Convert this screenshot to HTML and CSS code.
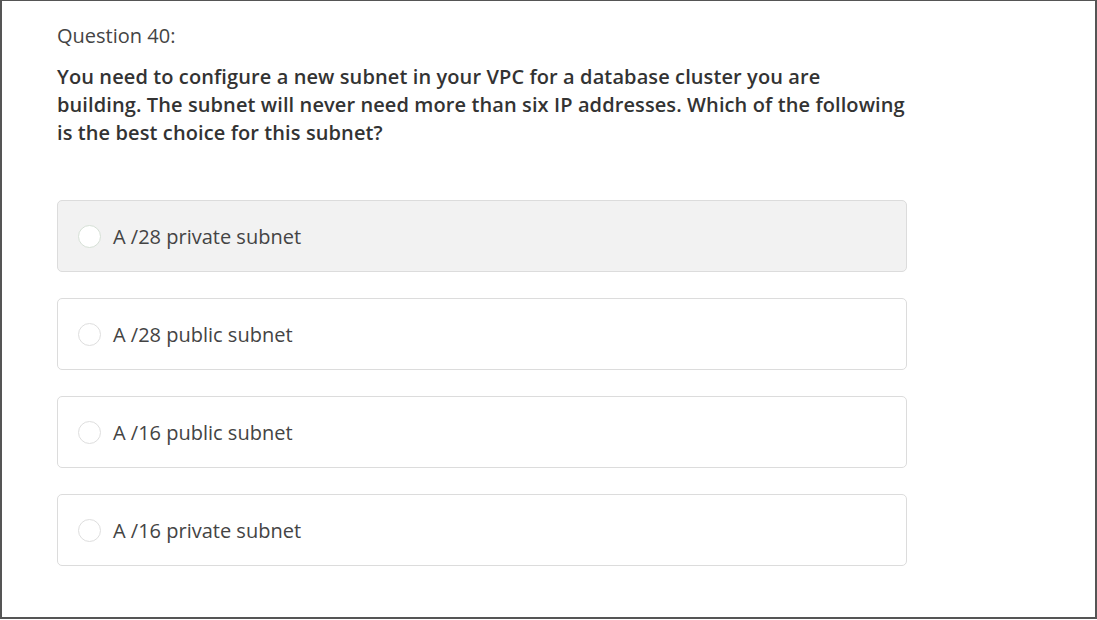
FILE: index.html
```html
<!DOCTYPE html>
<html>
<head>
<meta charset="utf-8">
<link rel="stylesheet" href="styles.css">
</head>
<body>
<div class="frame">
  <div class="question">
    <div class="qnum">Question 40:</div>
    <div class="qtext">You need to configure a new subnet in your VPC for a database cluster you are building. The subnet will never need more than six IP addresses. Which of the following is the best choice for this subnet?</div>
    <div class="options">
      <div class="option hover"><span class="radio"></span><span class="label">A /28 private subnet</span></div>
      <div class="option"><span class="radio"></span><span class="label">A /28 public subnet</span></div>
      <div class="option"><span class="radio"></span><span class="label">A /16 public subnet</span></div>
      <div class="option"><span class="radio"></span><span class="label">A /16 private subnet</span></div>
    </div>
  </div>
</div>
</body>
</html>
```
FILE: styles.css
```css
html, body {
  margin: 0;
  padding: 0;
  background: #fff;
}
.frame {
  box-sizing: border-box;
  width: 1097px;
  height: 619px;
  border-top: 1px solid #555;
  border-left: 2px solid #555;
  border-right: 2px solid #555;
  border-bottom: 2px solid #555;
  font-family: "Open Sans", "Noto Sans", sans-serif;
  color: #333;
}
.question {
  padding: 22px 0 0 55px;
  width: 850px;
}
.qnum {
  font-size: 20px;
  line-height: 26px;
  color: #444;
}
.qtext {
  margin-top: 14px;
  margin-right: -2px;
  font-size: 20px;
  letter-spacing: 0.1px;
  font-weight: 600;
  line-height: 28px;
  color: #333;
}
.options {
  margin-top: 53px;
  display: flex;
  flex-direction: column;
  gap: 26px;
}
.option {
  box-sizing: border-box;
  height: 72px;
  border: 1px solid #dcdcdc;
  border-radius: 5px;
  background: #fff;
  display: flex;
  align-items: center;
  padding-left: 20px;
}
.option.hover {
  background: #f2f2f2;
}
.radio {
  box-sizing: border-box;
  width: 23px;
  height: 23px;
  border-radius: 50%;
  border: 1px solid #dedede;
  background: #fff;
  flex: none;
}
.option.hover .radio {
  border-color: #d6e0d6;
}
.label {
  margin-left: 12px;
  font-size: 20px;
  color: #444;
}
```
